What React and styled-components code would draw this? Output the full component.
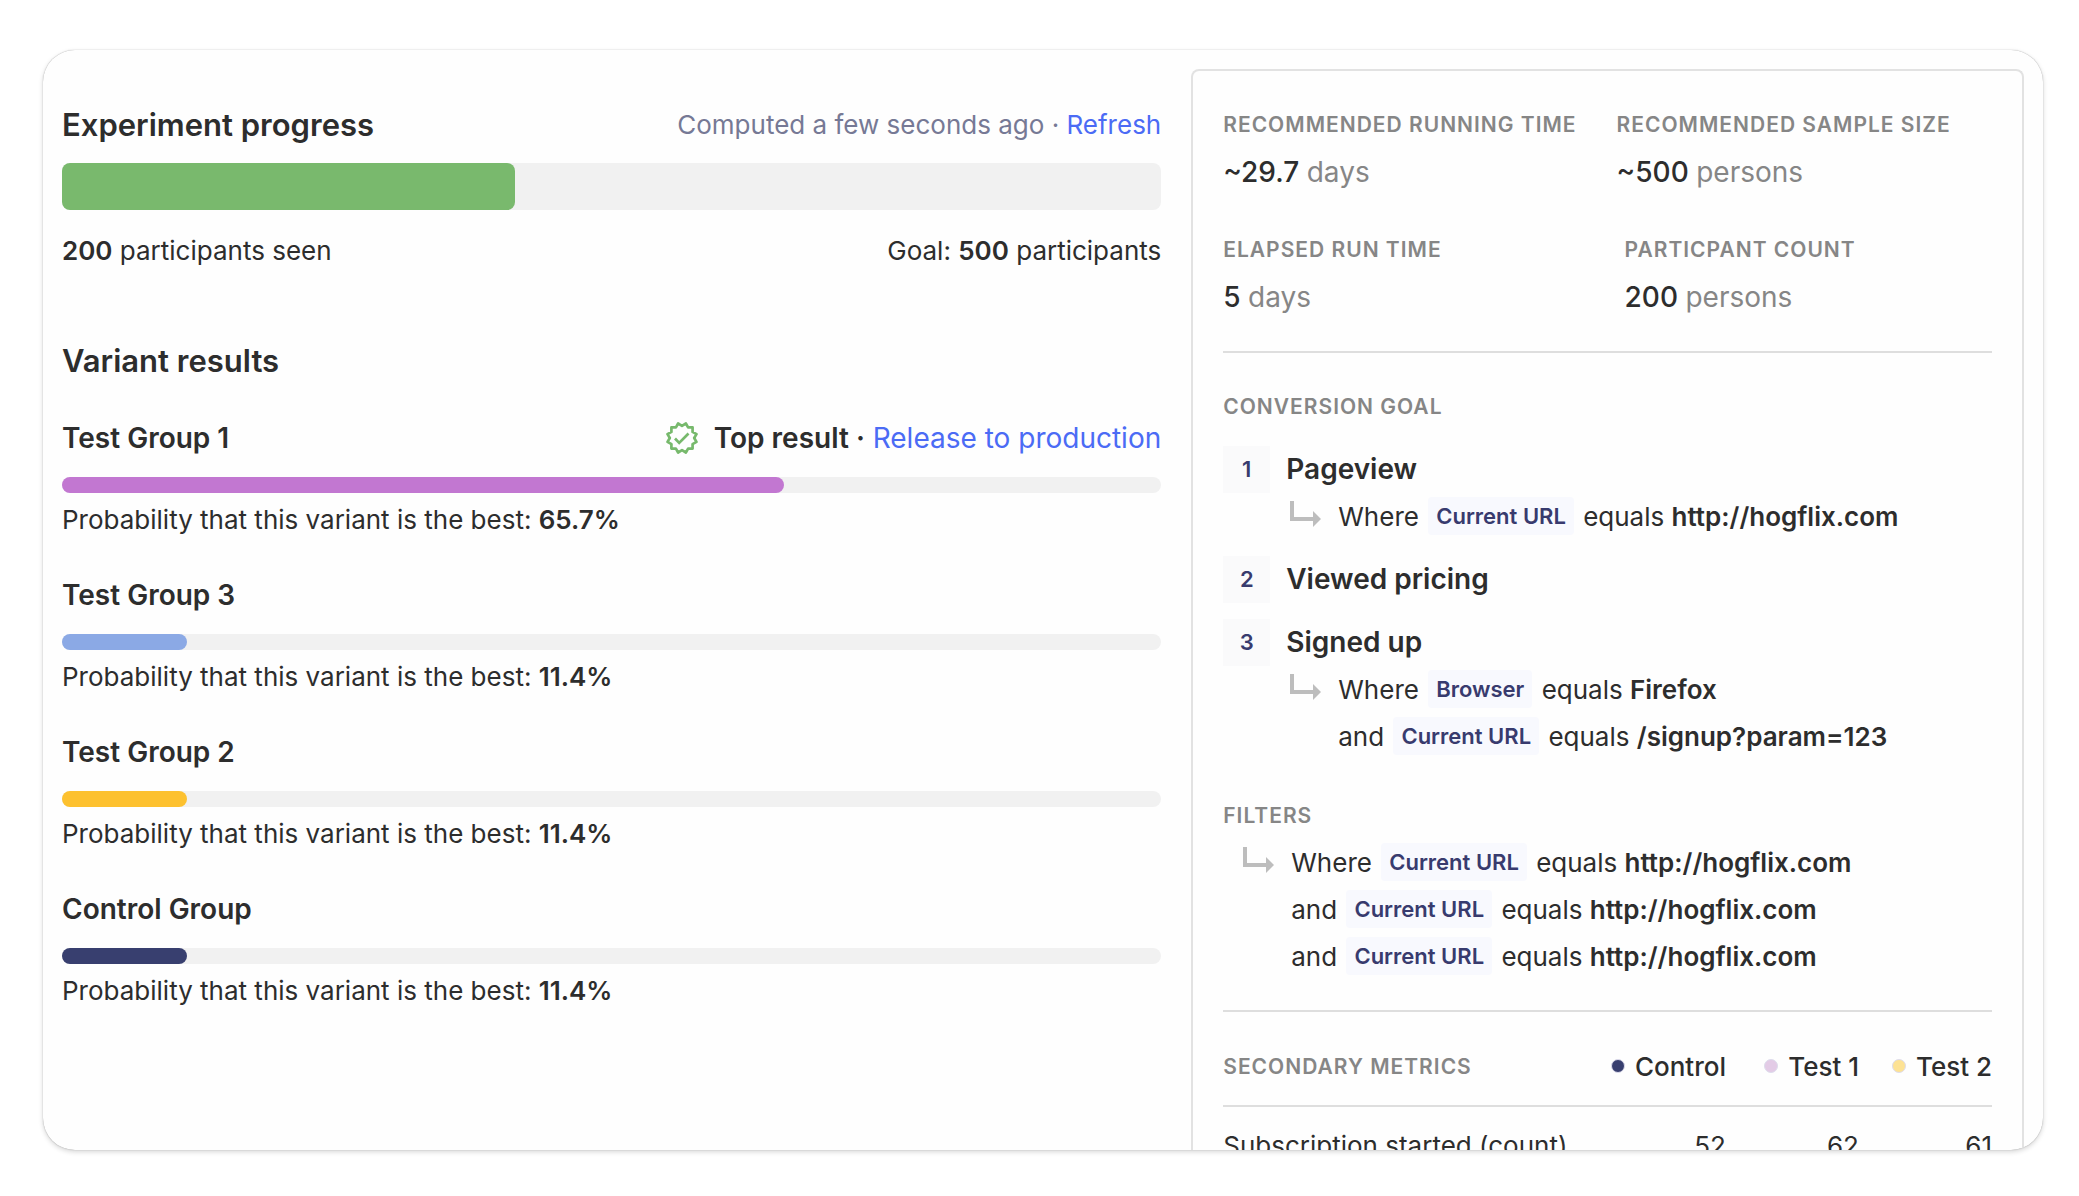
import React from 'react';
import styled, { createGlobalStyle } from 'styled-components';

const Global = createGlobalStyle`
  *, *::before, *::after { box-sizing: border-box; }
  body { margin: 0; background: #fff; color: #2d2d2d; font-family: Inter, "Liberation Sans", sans-serif; }
  h2, h3, h4, p, dl, dd, ol, ul { margin: 0; padding: 0; }
  ol, ul { list-style: none; }
`;

const Page = styled.div`
  display: flex;
  height: 100vh;
  padding: 50px 36px 46px 43px;
`;

const Card = styled.main`
  flex: 1;
  display: grid;
  grid-template-columns: minmax(0, 33fr) minmax(0, 25fr);
  gap: 30px;
  padding: 19px 19px 0;
  overflow: hidden;
  border-radius: 32px;
  background: #fefefe;
  box-shadow: 0 0 1px rgba(0, 0, 0, 0.4), 0 2px 5px rgba(0, 0, 0, 0.16);
`;

const Results = styled.section`
  padding-top: 36px;
`;

const Row = styled.div`
  display: flex;
  align-items: center;
  justify-content: space-between;
`;

const Title = styled.h2`
  font-size: 31px;
  line-height: 40px;
  font-weight: 600;
`;

const VariantTitle = styled(Title)`
  margin-top: 74px;
`;

const Link = styled.a`
  color: #4b6bf5;
  text-decoration: none;
`;

const Computed = styled.p`
  font-size: 26px;
  line-height: 40px;
  color: #767995;
`;

const Track = styled.div`
  height: ${(p) => (p.$large ? 47 : 16)}px;
  border-radius: 8px;
  background: #f1f1f1;
`;

const Fill = styled.div`
  height: 100%;
  border-radius: inherit;
  background: ${(p) => p.$color};
`;

const Progress = styled(Track)`
  margin: 18px 0 25px;
`;

const Text = styled.p`
  font-size: 26px;
  line-height: 32px;
`;

const Bold = styled.strong`
  font-weight: 600;
`;

const Variants = styled.ul`
  display: grid;
  gap: 40px;
  margin-top: 38px;
`;

const VariantHead = styled(Row)`
  margin-bottom: 20px;
`;

const Name = styled.h3`
  font-size: 28px;
  line-height: 38px;
  font-weight: 600;
`;

const TopResult = styled.div`
  display: flex;
  align-items: center;
  gap: 16px;
  font-size: 28px;
  line-height: 38px;
`;

const Probability = styled(Text)`
  margin-top: 11px;
`;

const Panel = styled.aside`
  padding: 36px 30px 0;
  border: 2px solid #e2e2e2;
  border-radius: 8px 8px 0 0;
  border-bottom: 0;
`;

const StatGroup = styled.div`
  display: grid;
  gap: 42px;
`;

const Stats = styled.dl`
  display: flex;
  gap: 40px;
`;

const Stat = styled.div`
  width: ${(p) => p.$width};
  white-space: nowrap;
`;

const Label = styled.h4`
  font-size: 21px;
  line-height: 36px;
  font-weight: 600;
  letter-spacing: 1px;
  color: #868686;
`;

const FiltersLabel = styled(Label)`
  margin-top: 38px;
`;

const Value = styled.dd`
  margin-top: 11px;
  font-size: 28px;
  line-height: 36px;
  font-weight: 500;
`;

const Unit = styled.span`
  font-weight: 400;
  color: #868686;
`;

const Rule = styled.hr`
  margin: ${(p) => p.$margin};
  border: 0;
  border-top: 2px solid #dedede;
`;

const Steps = styled.ol`
  display: grid;
  gap: 16px;
  margin-top: 21px;
`;

const Step = styled.li`
  display: grid;
  grid-template-columns: 47px minmax(0, 1fr);
  column-gap: 16px;
`;

const StepNumber = styled.span`
  height: 47px;
  background: #fafafb;
  color: #383b6e;
  font-size: 22px;
  line-height: 47px;
  font-weight: 600;
  text-align: center;
`;

const StepName = styled.h3`
  font-size: 28px;
  line-height: 47px;
  font-weight: 600;
`;

const Conditions = styled.div`
  display: flex;
  gap: 16px;
  white-space: nowrap;
`;

const Arrow = styled.svg`
  flex: none;
  width: 36px;
  height: 32px;
  margin-top: 8px;
`;

const Condition = styled.li`
  height: 47px;
  font-size: 26px;
  line-height: 47px;
`;

const Tag = styled.span`
  margin: 0 2px;
  padding: 6px 8px;
  border-radius: 4px;
  background: #f8f9fe;
  color: #383b6e;
  font-size: 22px;
  font-weight: 600;
  vertical-align: 2px;
`;

const Filters = styled.div`
  padding-left: 16px;
  margin-top: 5px;
`;

const Metrics = styled.table`
  width: 100%;
  border-collapse: collapse;
  font-size: 26px;
  line-height: 40px;
  th { padding: 0 0 18px; text-align: right; white-space: nowrap; }
  th:first-child, td:first-child { text-align: left; }
  thead { border-bottom: 2px solid #dedede; }
  td { padding: 19px 0; text-align: right; }
`;

const Group = styled.th`
  width: 133px;
  font-weight: 500;
`;

const Dot = styled.span`
  display: inline-block;
  width: 14px;
  height: 14px;
  margin-right: 10px;
  border: 1px solid #dddcec;
  border-radius: 50%;
  background: ${(p) => p.$color};
  vertical-align: 3px;
`;

const variants = [
  { name: 'Test Group 1', share: '65.7%', color: '#c277d1', top: true },
  { name: 'Test Group 3', share: '11.4%', color: '#8ba9e5' },
  { name: 'Test Group 2', share: '11.4%', color: '#fdc12f' },
  { name: 'Control Group', share: '11.4%', color: '#383f6f' },
];

const steps = [
  { name: 'Pageview', conditions: [['Current URL', 'http://hogflix.com']] },
  { name: 'Viewed pricing' },
  { name: 'Signed up', conditions: [['Browser', 'Firefox'], ['Current URL', '/signup?param=123']] },
];

const filters = [
  ['Current URL', 'http://hogflix.com'],
  ['Current URL', 'http://hogflix.com'],
  ['Current URL', 'http://hogflix.com'],
];

const groups = [
  { name: 'Control', color: '#383f6f', count: 52 },
  { name: 'Test 1', color: '#e3cbe6', count: 62 },
  { name: 'Test 2', color: '#fde294', count: 61 },
];

function Seal() {
  const points = Array.from({ length: 24 }, (_, i) => {
    const r = i % 2 ? 12.2 : 15;
    const a = (i * Math.PI) / 12 + Math.PI / 12;
    return `${(16 + r * Math.sin(a)).toFixed(2)},${(16 - r * Math.cos(a)).toFixed(2)}`;
  }).join(' ');
  return (
    <svg width="32" height="32" viewBox="0 0 32 32" fill="none" stroke="#77b96c" strokeWidth="2.7" aria-hidden="true">
      <polygon points={points} strokeLinejoin="round" />
      <path d="M9 16.5l4.2 4.4 9.3-9.4" />
    </svg>
  );
}

function ConditionList({ items }) {
  return (
    <Conditions>
      <Arrow viewBox="0 0 36 32" aria-hidden="true">
        <path d="M6 0v18h22" fill="none" stroke="#bdbdbd" strokeWidth="4" />
        <path d="M27 10l8 8-8 8z" fill="#bdbdbd" />
      </Arrow>
      <ul>
        {items.map(([property, value], i) => (
          <Condition key={i}>
            {i ? 'and' : 'Where'} <Tag>{property}</Tag> equals <Bold>{value}</Bold>
          </Condition>
        ))}
      </ul>
    </Conditions>
  );
}

function StatItem({ label, value, unit, width }) {
  return (
    <Stat $width={width}>
      <Label as="dt">{label}</Label>
      <Value>{value} <Unit>{unit}</Unit></Value>
    </Stat>
  );
}

export default function App() {
  return (
    <Page>
      <Global />
      <Card>
        <Results>
          <Row>
            <Title>Experiment progress</Title>
            <Computed>Computed a few seconds ago · <Link href="#refresh">Refresh</Link></Computed>
          </Row>
          <Progress $large>
            <Fill $color="#79b96d" style={{ width: '41.2%' }} />
          </Progress>
          <Row>
            <Text><Bold>200</Bold> participants seen</Text>
            <Text>Goal: <Bold>500</Bold> participants</Text>
          </Row>
          <VariantTitle>Variant results</VariantTitle>
          <Variants>
            {variants.map((v) => (
              <li key={v.name}>
                <VariantHead>
                  <Name>{v.name}</Name>
                  {v.top && (
                    <TopResult>
                      <Seal />
                      <span><Bold>Top result ·</Bold> <Link href="#release">Release to production</Link></span>
                    </TopResult>
                  )}
                </VariantHead>
                <Track>
                  <Fill $color={v.color} style={{ width: v.share }} />
                </Track>
                <Probability>Probability that this variant is the best: <Bold>{v.share}</Bold></Probability>
              </li>
            ))}
          </Variants>
        </Results>
        <Panel>
          <StatGroup>
            <Stats>
              <StatItem label="RECOMMENDED RUNNING TIME" value="~29.7" unit="days" />
              <StatItem label="RECOMMENDED SAMPLE SIZE" value="~500" unit="persons" />
            </Stats>
            <Stats>
              <StatItem label="ELAPSED RUN TIME" value="5" unit="days" width="47%" />
              <StatItem label="PARTICPANT COUNT" value="200" unit="persons" />
            </Stats>
          </StatGroup>
          <Rule $margin="36px 0 36px" />
          <Label>CONVERSION GOAL</Label>
          <Steps>
            {steps.map((s, i) => (
              <Step key={s.name}>
                <StepNumber>{i + 1}</StepNumber>
                <div>
                  <StepName>{s.name}</StepName>
                  {s.conditions && <ConditionList items={s.conditions} />}
                </div>
              </Step>
            ))}
          </Steps>
          <FiltersLabel>FILTERS</FiltersLabel>
          <Filters>
            <ConditionList items={filters} />
          </Filters>
          <Rule $margin="30px 0 35px" />
          <Metrics>
            <thead>
              <tr>
                <Label as="th" scope="col">SECONDARY METRICS</Label>
                {groups.map((g) => (
                  <Group key={g.name} scope="col"><Dot $color={g.color} />{g.name}</Group>
                ))}
              </tr>
            </thead>
            <tbody>
              <tr>
                <td>Subscription started (count)</td>
                {groups.map((g) => <td key={g.name}>{g.count}</td>)}
              </tr>
            </tbody>
          </Metrics>
        </Panel>
      </Card>
    </Page>
  );
}
